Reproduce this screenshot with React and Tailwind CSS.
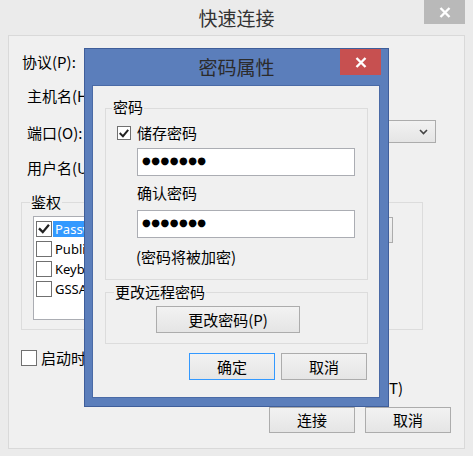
import React from "react";

const CheckMark = ({ size }) => (
  <svg width={size} height={size} viewBox="0 0 16 16" className="block">
    <path d="M3.2 8.2 L6.6 11.6 L12.8 4.2" fill="none" stroke="#222" strokeWidth="2.6" strokeLinecap="square" />
  </svg>
);

const XIcon = () => (
  <svg width="12" height="11" viewBox="0 0 12 11" className="block">
    <path d="M1.5 1 L10.5 10 M10.5 1 L1.5 10" stroke="#fff" strokeWidth="2.4" />
  </svg>
);

const SmallBox = ({ checked }) => (
  <div className="w-[14px] h-[14px] border border-[#707070] bg-white flex items-center justify-center shrink-0">
    {checked && <CheckMark size={13} />}
  </div>
);

const ListBox = ({ checked }) => (
  <div className="w-[16px] h-[16px] border border-[#707070] bg-white flex items-center justify-center shrink-0">
    {checked && <CheckMark size={14} />}
  </div>
);

const Dots = () => (
  <span className="font-['DejaVu_Sans',sans-serif] text-[10px] leading-[14px] tracking-[0.5px] text-black">●●●●●●●</span>
);

export default function App() {
  return (
    <div className="w-[473px] h-[456px] bg-[#ebebeb] relative overflow-hidden flex flex-col font-['Noto_Sans_CJK_SC',sans-serif] text-[15px] text-black">
      {/* title bar */}
      <div className="h-[35px] flex shrink-0">
        <div className="w-[49px]" />
        <div className="flex-1 text-center text-[19px] leading-[36px] text-[#333]">快速连接</div>
        <div className="w-[49px]">
          <div className="w-[41px] h-[24px] bg-[#b9b9b9] flex items-center justify-center">
            <XIcon />
          </div>
        </div>
      </div>

      {/* panel */}
      <div className="ml-[8px] w-[457px] h-[414px] border border-[#d9d9d9] bg-[#f0f0f0] flex flex-col">
        <div className="mt-[16px] ml-[13px] h-[20px] leading-[20px]">协议(P):</div>
        <div className="mt-[14px] ml-[18px] h-[20px] leading-[20px]">主机名(H):</div>
        <div className="mt-[14px] h-[23px] flex items-center">
          <div className="ml-[18px] h-[20px] leading-[20px] mt-[3px]">端口(O):</div>
          <div className="ml-auto mr-[28px] w-[300px] h-[23px] border border-[#acacac] bg-gradient-to-b from-[#f2f2f2] to-[#e5e5e5] flex items-center justify-end pr-[7px]">
            <svg width="9" height="6" viewBox="0 0 9 6" className="block">
              <path d="M1 1 L4.5 4.5 L8 1" fill="none" stroke="#444" strokeWidth="1.6" />
            </svg>
          </div>
        </div>
        <div className="mt-[15px] ml-[18px] h-[20px] leading-[20px]">用户名(U):</div>

        {/* group 鉴权 */}
        <div className="mt-[24px] ml-[12px] w-[402px] h-[128px] border border-[#dcdcdc] relative flex items-start">
          <span className="absolute left-[8px] -top-[11px] px-[1px] bg-[#f0f0f0] leading-[20px]">鉴权</span>
          <div className="ml-[11px] mt-[13px] w-[96px] h-[104px] border border-[#abadb3] bg-white pt-[2px] pl-[2px] flex flex-col overflow-hidden whitespace-nowrap font-['Noto_Sans',sans-serif] text-[13px]">
            <div className="h-[20px] flex items-center">
              <ListBox checked />
              <span className="ml-[1px] h-[16px] leading-[16px] px-[2px] bg-[#3399ff] text-white">Password</span>
            </div>
            <div className="h-[20px] flex items-center">
              <ListBox />
              <span className="ml-[1px] leading-[16px] px-[2px]">PublicKey</span>
            </div>
            <div className="h-[20px] flex items-center">
              <ListBox />
              <span className="ml-[1px] leading-[16px] px-[2px]">Keyboard</span>
            </div>
            <div className="h-[20px] flex items-center">
              <ListBox />
              <span className="ml-[1px] leading-[16px] px-[2px]">GSSAPI</span>
            </div>
          </div>
          <div className="ml-auto mr-[29px] mt-[14px] w-[80px] h-[26px] border border-[#acacac] bg-gradient-to-b from-[#f2f2f2] to-[#e5e5e5] text-center leading-[24px]">设置...</div>
        </div>

        <div className="mt-[20px] ml-[12px] h-[16px] flex items-center">
          <ListBox />
          <span className="ml-[4px] leading-[20px]">启动时连接</span>
        </div>
        <div className="mt-[12px] h-[20px] flex justify-end pr-[61px]">
          <span className="leading-[20px]">在标签页中打开(T)</span>
        </div>
        <div className="mt-[9px] flex justify-end gap-[10px] pr-[13px]">
          <div className="w-[86px] h-[26px] border border-[#acacac] bg-gradient-to-b from-[#f2f2f2] to-[#e5e5e5] text-center leading-[24px]">连接</div>
          <div className="w-[86px] h-[26px] border border-[#acacac] bg-gradient-to-b from-[#f2f2f2] to-[#e5e5e5] text-center leading-[24px]">取消</div>
        </div>
      </div>

      {/* modal dialog */}
      <div className="absolute left-[84px] top-[48px] w-[305px] h-[359px] border border-[#3f5e9a] bg-[#5b7ebb] flex flex-col">
        <div className="h-[36px] flex shrink-0">
          <div className="w-[48px]" />
          <div className="flex-1 text-center text-[19px] leading-[36px] text-[#2b2b2b]">密码属性</div>
          <div className="w-[48px]">
            <div className="w-[41px] h-[26px] bg-[#c75050] flex items-center justify-center">
              <XIcon />
            </div>
          </div>
        </div>
        <div className="ml-[7px] w-[288px] h-[313px] border border-[#4a6aa6] bg-[#f0f0f0] flex flex-col">
          {/* group 密码 */}
          <div className="mt-[22px] ml-[12px] w-[263px] h-[172px] border border-[#dcdcdc] relative flex flex-col">
            <span className="absolute left-[6px] -top-[12px] px-[1px] bg-[#f0f0f0] leading-[20px]">密码</span>
            <div className="mt-[17px] ml-[11px] h-[14px] flex items-center gap-[6px]">
              <SmallBox checked />
              <span className="leading-[20px]">储存密码</span>
            </div>
            <div className="mt-[8px] ml-[31px] w-[218px] h-[28px] border border-[#abadb3] bg-white flex items-center pl-[4px] pb-[3px]">
              <Dots />
            </div>
            <div className="mt-[7px] ml-[31px] h-[20px] leading-[20px]">确认密码</div>
            <div className="mt-[7px] ml-[31px] w-[218px] h-[28px] border border-[#abadb3] bg-white flex items-center pl-[4px] pb-[3px]">
              <Dots />
            </div>
            <div className="mt-[9px] ml-[30px] h-[20px] leading-[20px]">(密码将被加密)</div>
          </div>

          {/* group 更改远程密码 */}
          <div className="mt-[12px] ml-[12px] w-[263px] h-[52px] border border-[#dcdcdc] relative flex flex-col">
            <span className="absolute left-[8px] -top-[11px] px-[1px] bg-[#f0f0f0] leading-[20px]">更改远程密码</span>
            <div className="mt-[13px] ml-[50px] w-[144px] h-[27px] border border-[#acacac] bg-gradient-to-b from-[#f2f2f2] to-[#e5e5e5] text-center leading-[25px]">更改密码(P)</div>
          </div>

          <div className="mt-[9px] ml-[96px] flex gap-[6px]">
            <div className="w-[86px] h-[27px] border border-[#3399ff] bg-gradient-to-b from-[#f2f2f2] to-[#e5e5e5] text-center leading-[25px]">确定</div>
            <div className="w-[86px] h-[27px] border border-[#acacac] bg-gradient-to-b from-[#f2f2f2] to-[#e5e5e5] text-center leading-[25px]">取消</div>
          </div>
        </div>
      </div>
    </div>
  );
}
